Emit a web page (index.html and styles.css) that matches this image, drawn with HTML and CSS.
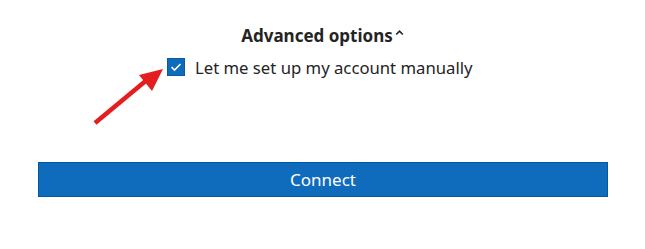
FILE: index.html
```html
<!DOCTYPE html>
<html>
<head>
<meta charset="utf-8">
<link rel="stylesheet" href="styles.css">
</head>
<body>
<div class="page">
  <div class="advanced">
    <span class="adv-title">Advanced options</span>
    <svg class="caret" width="9" height="7" viewBox="0 0 9 7"><path d="M1.2 5.5 L4.5 2.2 L7.8 5.5" fill="none" stroke="#222" stroke-width="1.6"/></svg>
  </div>
  <label class="check-row">
    <span class="checkbox">
      <svg width="12" height="10" viewBox="0 0 12 10"><path d="M1.5 5 L4.5 8 L10.5 2" fill="none" stroke="#fff" stroke-width="1.6"/></svg>
    </span>
    <span class="check-label">Let me set up my account manually</span>
  </label>
  <div class="actions">
    <button class="connect">Connect</button>
  </div>
  <svg class="arrow" width="645" height="249" viewBox="0 0 645 249">
    <line x1="95" y1="123" x2="148" y2="79" stroke="#e41e1e" stroke-width="4.5"/>
    <polygon points="163,69 139,75 152,91" fill="#e41e1e"/>
  </svg>
</div>
</body>
</html>
```
FILE: styles.css
```css
html, body {
  margin: 0;
  padding: 0;
  background: #fff;
}
body {
  font-family: "Noto Sans", "Open Sans", sans-serif;
  color: #242424;
}
.page {
  position: relative;
  width: 645px;
  height: 249px;
  padding-top: 24px;
  box-sizing: border-box;
}
.advanced {
  display: flex;
  justify-content: center;
  align-items: center;
  gap: 2px;
  height: 22px;
}
.adv-title {
  font-weight: 700;
  font-size: 17px;
}
.caret {
  margin-top: -5px;
}
.check-row {
  display: flex;
  align-items: center;
  gap: 10px;
  margin-top: 11px;
  padding-left: 167px;
  height: 20px;
}
.checkbox {
  width: 18px;
  height: 18px;
  background: #0f6cbd;
  border: 1px solid #0b5a9e;
  box-sizing: border-box;
  display: flex;
  align-items: center;
  justify-content: center;
}
.check-label {
  font-size: 16.7px;
}
.actions {
  padding-left: 38px;
  margin-top: 85px;
}
.connect {
  width: 570px;
  height: 35px;
  background: #0f6cbd;
  border: 1px solid #005a9e;
  color: #fff;
  font-family: "Noto Sans", "Open Sans", sans-serif;
  font-size: 17px;
  padding: 0;
}
.arrow {
  position: absolute;
  left: 0;
  top: 0;
  pointer-events: none;
}
```
